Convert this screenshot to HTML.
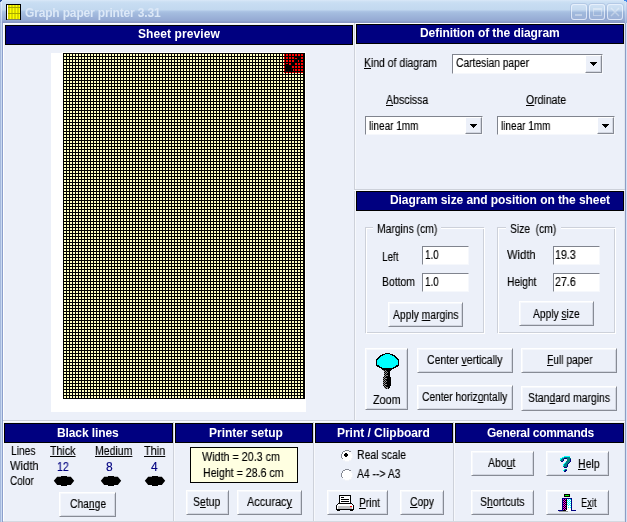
<!DOCTYPE html><html><head><meta charset="utf-8"><style>
html,body{margin:0;padding:0}
body{width:627px;height:522px;position:relative;overflow:hidden;background:#ECF0F9;font-family:"Liberation Sans",sans-serif}
body>div,body>span,body>svg{position:absolute;box-sizing:border-box;white-space:pre}
svg{display:block}
u{text-decoration:underline}
body>span{will-change:transform}
</style></head><body>
<div style="left:0px;top:0px;width:627px;height:23px;background:linear-gradient(to bottom,#DCE9F8 0px,#D0E2F5 1px,#C8DDF2 3px,#C2D8EF 10px,#AEC6E6 11px,#A4BCDF 13px,#94A8D2 21px,#8797C4 22px)"></div>
<div style="left:0px;top:23px;width:627px;height:499px;background:#ECF0F9"></div>
<div style="left:0px;top:3px;width:1px;height:20px;background:linear-gradient(#C4D6F0,#9EB2DA)"></div>
<div style="left:1px;top:2px;width:1px;height:21px;background:linear-gradient(#E4EEFA,#C4D4EE)"></div>
<div style="left:625px;top:3px;width:1px;height:20px;background:linear-gradient(#D6E4F6,#A8BCE0)"></div>
<div style="left:626px;top:2px;width:1px;height:21px;background:linear-gradient(#C4D6F0,#9EB2DA)"></div>
<div style="left:0px;top:23px;width:1px;height:499px;background:#A6B9DD"></div>
<div style="left:1px;top:23px;width:1px;height:499px;background:#C9DAF2"></div>
<div style="left:2px;top:23px;width:1px;height:499px;background:#8C9FCC"></div>
<div style="left:3px;top:23px;width:1px;height:499px;background:#fff"></div>
<div style="left:3px;top:23px;width:622px;height:1px;background:#fff"></div>
<div style="left:624px;top:23px;width:1px;height:499px;background:#E2E6EE"></div>
<div style="left:625px;top:23px;width:1px;height:499px;background:#8C9EC6"></div>
<div style="left:626px;top:23px;width:1px;height:499px;background:#D4E2F6"></div>
<div style="left:3px;top:521px;width:622px;height:1px;background:#D5D9E1"></div>
<div style="left:0px;top:0px;width:2px;height:1px;background:#2B4F9C"></div>
<div style="left:0px;top:1px;width:1px;height:1px;background:#2B4F9C"></div>
<div style="left:624px;top:0px;width:3px;height:1px;background:#3D86E8"></div>
<div style="left:626px;top:1px;width:1px;height:1px;background:#3D86E8"></div>
<svg style="left:6px;top:4px" width="15" height="16" shape-rendering="crispEdges"><rect x="0" y="0" width="15" height="1" fill="#000"/><rect x="0" y="1" width="1" height="1" fill="#000"/><rect x="1" y="1" width="1" height="1" fill="#FFFFFF"/><rect x="2" y="1" width="2" height="1" fill="#D8D800"/><rect x="4" y="1" width="1" height="1" fill="#FFFF00"/><rect x="5" y="1" width="2" height="1" fill="#D8D800"/><rect x="7" y="1" width="1" height="1" fill="#FFFF00"/><rect x="8" y="1" width="2" height="1" fill="#D8D800"/><rect x="10" y="1" width="1" height="1" fill="#FFFF00"/><rect x="11" y="1" width="2" height="1" fill="#D8D800"/><rect x="13" y="1" width="1" height="1" fill="#FFFF00"/><rect x="14" y="1" width="1" height="1" fill="#000"/><rect x="0" y="2" width="1" height="1" fill="#000"/><rect x="1" y="2" width="1" height="1" fill="#FFFFFF"/><rect x="2" y="2" width="2" height="1" fill="#D8D800"/><rect x="4" y="2" width="1" height="1" fill="#FFFF00"/><rect x="5" y="2" width="2" height="1" fill="#D8D800"/><rect x="7" y="2" width="1" height="1" fill="#FFFF00"/><rect x="8" y="2" width="2" height="1" fill="#D8D800"/><rect x="10" y="2" width="1" height="1" fill="#FFFF00"/><rect x="11" y="2" width="2" height="1" fill="#D8D800"/><rect x="13" y="2" width="1" height="1" fill="#FFFF00"/><rect x="14" y="2" width="1" height="1" fill="#000"/><rect x="0" y="3" width="1" height="1" fill="#000"/><rect x="1" y="3" width="1" height="1" fill="#FFFFFF"/><rect x="2" y="3" width="12" height="1" fill="#A8A800"/><rect x="14" y="3" width="1" height="1" fill="#000"/><rect x="0" y="4" width="1" height="1" fill="#000"/><rect x="1" y="4" width="1" height="1" fill="#FFFFFF"/><rect x="2" y="4" width="2" height="1" fill="#D8D800"/><rect x="4" y="4" width="1" height="1" fill="#FFFF00"/><rect x="5" y="4" width="2" height="1" fill="#D8D800"/><rect x="7" y="4" width="1" height="1" fill="#FFFF00"/><rect x="8" y="4" width="2" height="1" fill="#D8D800"/><rect x="10" y="4" width="1" height="1" fill="#FFFF00"/><rect x="11" y="4" width="2" height="1" fill="#D8D800"/><rect x="13" y="4" width="1" height="1" fill="#FFFF00"/><rect x="14" y="4" width="1" height="1" fill="#000"/><rect x="0" y="5" width="1" height="1" fill="#000"/><rect x="1" y="5" width="1" height="1" fill="#FFFFFF"/><rect x="2" y="5" width="2" height="1" fill="#D8D800"/><rect x="4" y="5" width="1" height="1" fill="#FFFF00"/><rect x="5" y="5" width="2" height="1" fill="#D8D800"/><rect x="7" y="5" width="1" height="1" fill="#FFFF00"/><rect x="8" y="5" width="2" height="1" fill="#D8D800"/><rect x="10" y="5" width="1" height="1" fill="#FFFF00"/><rect x="11" y="5" width="2" height="1" fill="#D8D800"/><rect x="13" y="5" width="1" height="1" fill="#FFFF00"/><rect x="14" y="5" width="1" height="1" fill="#000"/><rect x="0" y="6" width="1" height="1" fill="#000"/><rect x="1" y="6" width="1" height="1" fill="#FFFFFF"/><rect x="2" y="6" width="2" height="1" fill="#D8D800"/><rect x="4" y="6" width="1" height="1" fill="#FFFF00"/><rect x="5" y="6" width="2" height="1" fill="#D8D800"/><rect x="7" y="6" width="1" height="1" fill="#FFFF00"/><rect x="8" y="6" width="2" height="1" fill="#D8D800"/><rect x="10" y="6" width="1" height="1" fill="#FFFF00"/><rect x="11" y="6" width="2" height="1" fill="#D8D800"/><rect x="13" y="6" width="1" height="1" fill="#FFFF00"/><rect x="14" y="6" width="1" height="1" fill="#000"/><rect x="0" y="7" width="1" height="1" fill="#000"/><rect x="1" y="7" width="1" height="1" fill="#FFFFFF"/><rect x="2" y="7" width="2" height="1" fill="#D8D800"/><rect x="4" y="7" width="1" height="1" fill="#FFFF00"/><rect x="5" y="7" width="2" height="1" fill="#D8D800"/><rect x="7" y="7" width="1" height="1" fill="#FFFF00"/><rect x="8" y="7" width="2" height="1" fill="#D8D800"/><rect x="10" y="7" width="1" height="1" fill="#FFFF00"/><rect x="11" y="7" width="2" height="1" fill="#D8D800"/><rect x="13" y="7" width="1" height="1" fill="#FFFF00"/><rect x="14" y="7" width="1" height="1" fill="#000"/><rect x="0" y="8" width="1" height="1" fill="#000"/><rect x="1" y="8" width="1" height="1" fill="#FFFFFF"/><rect x="2" y="8" width="2" height="1" fill="#D8D800"/><rect x="4" y="8" width="1" height="1" fill="#FFFF00"/><rect x="5" y="8" width="2" height="1" fill="#D8D800"/><rect x="7" y="8" width="1" height="1" fill="#FFFF00"/><rect x="8" y="8" width="2" height="1" fill="#D8D800"/><rect x="10" y="8" width="1" height="1" fill="#FFFF00"/><rect x="11" y="8" width="2" height="1" fill="#D8D800"/><rect x="13" y="8" width="1" height="1" fill="#FFFF00"/><rect x="14" y="8" width="1" height="1" fill="#000"/><rect x="0" y="9" width="1" height="1" fill="#000"/><rect x="1" y="9" width="1" height="1" fill="#FFFFFF"/><rect x="2" y="9" width="12" height="1" fill="#A8A800"/><rect x="14" y="9" width="1" height="1" fill="#000"/><rect x="0" y="10" width="1" height="1" fill="#000"/><rect x="1" y="10" width="1" height="1" fill="#FFFFFF"/><rect x="2" y="10" width="2" height="1" fill="#D8D800"/><rect x="4" y="10" width="1" height="1" fill="#FFFF00"/><rect x="5" y="10" width="2" height="1" fill="#D8D800"/><rect x="7" y="10" width="1" height="1" fill="#FFFF00"/><rect x="8" y="10" width="2" height="1" fill="#D8D800"/><rect x="10" y="10" width="1" height="1" fill="#FFFF00"/><rect x="11" y="10" width="2" height="1" fill="#D8D800"/><rect x="13" y="10" width="1" height="1" fill="#FFFF00"/><rect x="14" y="10" width="1" height="1" fill="#000"/><rect x="0" y="11" width="1" height="1" fill="#000"/><rect x="1" y="11" width="1" height="1" fill="#FFFFFF"/><rect x="2" y="11" width="2" height="1" fill="#D8D800"/><rect x="4" y="11" width="1" height="1" fill="#FFFF00"/><rect x="5" y="11" width="2" height="1" fill="#D8D800"/><rect x="7" y="11" width="1" height="1" fill="#FFFF00"/><rect x="8" y="11" width="2" height="1" fill="#D8D800"/><rect x="10" y="11" width="1" height="1" fill="#FFFF00"/><rect x="11" y="11" width="2" height="1" fill="#D8D800"/><rect x="13" y="11" width="1" height="1" fill="#FFFF00"/><rect x="14" y="11" width="1" height="1" fill="#000"/><rect x="0" y="12" width="1" height="1" fill="#000"/><rect x="1" y="12" width="1" height="1" fill="#FFFFFF"/><rect x="2" y="12" width="2" height="1" fill="#D8D800"/><rect x="4" y="12" width="1" height="1" fill="#FFFF00"/><rect x="5" y="12" width="2" height="1" fill="#D8D800"/><rect x="7" y="12" width="1" height="1" fill="#FFFF00"/><rect x="8" y="12" width="2" height="1" fill="#D8D800"/><rect x="10" y="12" width="1" height="1" fill="#FFFF00"/><rect x="11" y="12" width="2" height="1" fill="#D8D800"/><rect x="13" y="12" width="1" height="1" fill="#FFFF00"/><rect x="14" y="12" width="1" height="1" fill="#000"/><rect x="0" y="13" width="1" height="1" fill="#000"/><rect x="1" y="13" width="1" height="1" fill="#FFFFFF"/><rect x="2" y="13" width="2" height="1" fill="#D8D800"/><rect x="4" y="13" width="1" height="1" fill="#FFFF00"/><rect x="5" y="13" width="2" height="1" fill="#D8D800"/><rect x="7" y="13" width="1" height="1" fill="#FFFF00"/><rect x="8" y="13" width="2" height="1" fill="#D8D800"/><rect x="10" y="13" width="1" height="1" fill="#FFFF00"/><rect x="11" y="13" width="2" height="1" fill="#D8D800"/><rect x="13" y="13" width="1" height="1" fill="#FFFF00"/><rect x="14" y="13" width="1" height="1" fill="#000"/><rect x="0" y="14" width="1" height="1" fill="#000"/><rect x="1" y="14" width="1" height="1" fill="#FFFFFF"/><rect x="2" y="14" width="2" height="1" fill="#D8D800"/><rect x="4" y="14" width="1" height="1" fill="#FFFF00"/><rect x="5" y="14" width="2" height="1" fill="#D8D800"/><rect x="7" y="14" width="1" height="1" fill="#FFFF00"/><rect x="8" y="14" width="2" height="1" fill="#D8D800"/><rect x="10" y="14" width="1" height="1" fill="#FFFF00"/><rect x="11" y="14" width="2" height="1" fill="#D8D800"/><rect x="13" y="14" width="1" height="1" fill="#FFFF00"/><rect x="14" y="14" width="1" height="1" fill="#000"/><rect x="0" y="15" width="1" height="1" fill="#000"/><rect x="1" y="15" width="13" height="1" fill="#808060"/><rect x="14" y="15" width="1" height="1" fill="#000"/></svg>
<span style="left:25px;top:6px;font:bold 12px Liberation Sans;line-height:14px;color:#DCE8F7;letter-spacing:-0.161px;">Graph paper printer 3.31</span>
<div style="left:571px;top:4px;width:16px;height:16px;border:1px solid rgba(240,246,255,0.75);border-radius:3px;box-sizing:border-box;box-shadow:0 0 0 1px rgba(120,145,190,0.25);background:linear-gradient(rgba(255,255,255,0.15),rgba(255,255,255,0.05) 50%,rgba(120,150,200,0.12) 50%,rgba(255,255,255,0.05))"></div>
<div style="left:589px;top:4px;width:16px;height:16px;border:1px solid rgba(240,246,255,0.75);border-radius:3px;box-sizing:border-box;box-shadow:0 0 0 1px rgba(120,145,190,0.25);background:linear-gradient(rgba(255,255,255,0.15),rgba(255,255,255,0.05) 50%,rgba(120,150,200,0.12) 50%,rgba(255,255,255,0.05))"></div>
<div style="left:607px;top:4px;width:16px;height:16px;border:1px solid rgba(240,246,255,0.75);border-radius:3px;box-sizing:border-box;box-shadow:0 0 0 1px rgba(120,145,190,0.25);background:linear-gradient(rgba(255,255,255,0.15),rgba(255,255,255,0.05) 50%,rgba(120,150,200,0.12) 50%,rgba(255,255,255,0.05))"></div>
<div style="left:575px;top:14px;width:7px;height:2px;background:rgba(255,255,255,0.35)"></div>
<div style="left:593px;top:8px;width:9px;height:8px;border:1px solid rgba(255,255,255,0.35);border-top-width:2px;box-sizing:border-box"></div>
<svg style="left:607px;top:4px" width="16" height="16"><path d="M4 4L12 12M12 4L4 12" stroke="rgba(255,255,255,0.35)" stroke-width="1.5"/></svg>
<div style="left:5px;top:25px;width:348px;height:20px;border:1px solid #000;background:#000080"></div>
<span style="left:138px;top:27px;font:bold 12px Liberation Sans;line-height:14px;color:#fff;letter-spacing:0.094px;">Sheet preview</span>
<div style="left:51px;top:53px;width:255px;height:359px;background:#fff"></div>
<div style="left:62px;top:52px;width:244px;height:1px;background:#fff"></div>
<div style="left:63px;top:53px;width:242px;height:346px;background-color:#FFFFC0;background-image:linear-gradient(to right,#000 1px,transparent 1px),linear-gradient(to bottom,#000 1px,transparent 1px);background-size:3px 3px"></div>
<div style="left:303px;top:53px;width:2px;height:346px;background:#000"></div>
<div style="left:63px;top:398px;width:242px;height:1px;background:#000"></div>
<div style="left:284px;top:53px;width:20px;height:20px;background-color:#FF0000;background-image:linear-gradient(to right,#000 1px,transparent 1px),linear-gradient(to bottom,#000 1px,transparent 1px);background-size:3px 3px;background-position:1px 0"></div>
<div style="left:298px;top:57px;width:2px;height:2px;background:#000"></div>
<div style="left:295px;top:57px;width:2px;height:1px;background:#000"></div>
<div style="left:295px;top:60px;width:2px;height:2px;background:#000"></div>
<div style="left:299px;top:60px;width:1px;height:2px;background:#000"></div>
<div style="left:292px;top:63px;width:2px;height:2px;background:#000"></div>
<div style="left:286px;top:64px;width:2px;height:1px;background:#000"></div>
<div style="left:286px;top:66px;width:5px;height:2px;background:#000"></div>
<div style="left:286px;top:69px;width:5px;height:2px;background:#000"></div>
<div style="left:292px;top:69px;width:1px;height:2px;background:#000"></div>
<div style="left:289px;top:68px;width:2px;height:1px;background:#000"></div>
<div style="left:287px;top:65px;width:4px;height:1px;background:#000"></div>
<div style="left:354px;top:23px;width:1px;height:398px;background:#CDD1DA"></div>
<div style="left:355px;top:23px;width:1px;height:398px;background:#F6F8FC"></div>
<div style="left:356px;top:24px;width:268px;height:20px;border:1px solid #000;background:#000080"></div>
<span style="left:420px;top:26px;font:bold 12px Liberation Sans;line-height:14px;color:#fff;letter-spacing:-0.069px;">Definition of the diagram</span>
<span style="left:364px;top:56px;font:12px Liberation Sans;line-height:14px;color:#000;transform:scaleX(0.8685);transform-origin:0 0;-webkit-text-stroke:0.15px #000;"><u>K</u>ind of diagram</span>
<div style="left:452px;top:54px;width:151px;height:20px;border:1px solid;border-color:#80848E #F6F8FC #F6F8FC #80848E;background:#fff"></div>
<div style="left:585px;top:55px;width:17px;height:18px;border:1px solid;border-color:#FFFFFF #878B95 #878B95 #FFFFFF;box-shadow:inset -1px -1px #D2D6E0;background:#ECF0F9"></div>
<svg style="left:590px;top:62px" width="7" height="4"><path d="M0 0h7v1h-1v1h-1v1h-1v1h-1v-1h-1v-1h-1v-1h-1z" fill="#000"/></svg>
<span style="left:456px;top:56px;font:12px Liberation Sans;line-height:14px;color:#000;transform:scaleX(0.8549);transform-origin:0 0;-webkit-text-stroke:0.15px #000;">Cartesian paper</span>
<span style="left:386px;top:93px;font:12px Liberation Sans;line-height:14px;color:#000;transform:scaleX(0.8812);transform-origin:0 0;-webkit-text-stroke:0.15px #000;"><u>A</u>bscissa</span>
<span style="left:526px;top:93px;font:12px Liberation Sans;line-height:14px;color:#000;transform:scaleX(0.8738);transform-origin:0 0;-webkit-text-stroke:0.15px #000;"><u>O</u>rdinate</span>
<div style="left:365px;top:116px;width:118px;height:19px;border:1px solid;border-color:#80848E #F6F8FC #F6F8FC #80848E;background:#fff"></div>
<div style="left:465px;top:117px;width:17px;height:17px;border:1px solid;border-color:#FFFFFF #878B95 #878B95 #FFFFFF;box-shadow:inset -1px -1px #D2D6E0;background:#ECF0F9"></div>
<svg style="left:470px;top:124px" width="7" height="4"><path d="M0 0h7v1h-1v1h-1v1h-1v1h-1v-1h-1v-1h-1v-1h-1z" fill="#000"/></svg>
<span style="left:369px;top:119px;font:12px Liberation Sans;line-height:14px;color:#000;transform:scaleX(0.8340);transform-origin:0 0;-webkit-text-stroke:0.15px #000;">linear 1mm</span>
<div style="left:497px;top:116px;width:118px;height:19px;border:1px solid;border-color:#80848E #F6F8FC #F6F8FC #80848E;background:#fff"></div>
<div style="left:597px;top:117px;width:17px;height:17px;border:1px solid;border-color:#FFFFFF #878B95 #878B95 #FFFFFF;box-shadow:inset -1px -1px #D2D6E0;background:#ECF0F9"></div>
<svg style="left:602px;top:124px" width="7" height="4"><path d="M0 0h7v1h-1v1h-1v1h-1v1h-1v-1h-1v-1h-1v-1h-1z" fill="#000"/></svg>
<span style="left:501px;top:119px;font:12px Liberation Sans;line-height:14px;color:#000;transform:scaleX(0.8340);transform-origin:0 0;-webkit-text-stroke:0.15px #000;">linear 1mm</span>
<div style="left:354px;top:189px;width:271px;height:1px;background:#CDD1DA"></div>
<div style="left:354px;top:190px;width:271px;height:1px;background:#FAFBFD"></div>
<div style="left:356px;top:191px;width:268px;height:20px;border:1px solid #000;background:#000080"></div>
<span style="left:390px;top:193px;font:bold 12px Liberation Sans;line-height:14px;color:#fff;letter-spacing:-0.073px;">Diagram size and position on the sheet</span>
<div style="left:365px;top:227px;width:119px;height:106px;border:1px solid #CDD1DA;background:transparent"></div>
<div style="left:366px;top:228px;width:119px;height:106px;border:1px solid #fff;background:transparent"></div>
<div style="left:373px;top:225px;width:68px;height:5px;background:#ECF0F9"></div>
<span style="left:377px;top:222px;font:12px Liberation Sans;line-height:14px;color:#000;transform:scaleX(0.8614);transform-origin:0 0;-webkit-text-stroke:0.15px #000;">Margins (cm)</span>
<span style="left:382px;top:250px;font:12px Liberation Sans;line-height:14px;color:#000;transform:scaleX(0.8220);transform-origin:0 0;-webkit-text-stroke:0.15px #000;">Left</span>
<div style="left:422px;top:246px;width:47px;height:19px;border:1px solid;border-color:#80848E #F6F8FC #F6F8FC #80848E;background:#fff"></div>
<span style="left:425px;top:248px;font:12px Liberation Sans;line-height:14px;color:#000;transform:scaleX(0.8232);transform-origin:0 0;-webkit-text-stroke:0.15px #000;">1.0</span>
<span style="left:382px;top:275px;font:12px Liberation Sans;line-height:14px;color:#000;transform:scaleX(0.8680);transform-origin:0 0;-webkit-text-stroke:0.15px #000;">Bottom</span>
<div style="left:422px;top:273px;width:47px;height:19px;border:1px solid;border-color:#80848E #F6F8FC #F6F8FC #80848E;background:#fff"></div>
<span style="left:425px;top:275px;font:12px Liberation Sans;line-height:14px;color:#000;transform:scaleX(0.8232);transform-origin:0 0;-webkit-text-stroke:0.15px #000;">1.0</span>
<div style="left:388px;top:302px;width:75px;height:25px;border:1px solid;border-color:#FFFFFF #878B95 #878B95 #FFFFFF;box-shadow:inset 1px 1px #F6F8FC,inset -1px -1px #D2D6E0;background:#ECF0F9"></div>
<span style="left:393px;top:308px;font:12px Liberation Sans;line-height:14px;color:#000;transform:scaleX(0.8615);transform-origin:0 0;-webkit-text-stroke:0.15px #000;">Apply <u>m</u>argins</span>
<div style="left:497px;top:227px;width:118px;height:106px;border:1px solid #CDD1DA;background:transparent"></div>
<div style="left:498px;top:228px;width:118px;height:106px;border:1px solid #fff;background:transparent"></div>
<div style="left:506px;top:225px;width:55px;height:5px;background:#ECF0F9"></div>
<span style="left:510px;top:222px;font:12px Liberation Sans;line-height:14px;color:#000;transform:scaleX(0.8555);transform-origin:0 0;-webkit-text-stroke:0.15px #000;">Size&nbsp; (cm)</span>
<span style="left:507px;top:248px;font:12px Liberation Sans;line-height:14px;color:#000;transform:scaleX(0.9333);transform-origin:0 0;-webkit-text-stroke:0.15px #000;">Width</span>
<div style="left:553px;top:246px;width:47px;height:19px;border:1px solid;border-color:#80848E #F6F8FC #F6F8FC #80848E;background:#fff"></div>
<span style="left:555px;top:248px;font:12px Liberation Sans;line-height:14px;color:#000;transform:scaleX(0.8868);transform-origin:0 0;-webkit-text-stroke:0.15px #000;">19.3</span>
<span style="left:507px;top:275px;font:12px Liberation Sans;line-height:14px;color:#000;transform:scaleX(0.8486);transform-origin:0 0;-webkit-text-stroke:0.15px #000;">Height</span>
<div style="left:553px;top:273px;width:47px;height:19px;border:1px solid;border-color:#80848E #F6F8FC #F6F8FC #80848E;background:#fff"></div>
<span style="left:555px;top:275px;font:12px Liberation Sans;line-height:14px;color:#000;transform:scaleX(0.8868);transform-origin:0 0;-webkit-text-stroke:0.15px #000;">27.6</span>
<div style="left:519px;top:301px;width:75px;height:25px;border:1px solid;border-color:#FFFFFF #878B95 #878B95 #FFFFFF;box-shadow:inset 1px 1px #F6F8FC,inset -1px -1px #D2D6E0;background:#ECF0F9"></div>
<span style="left:533px;top:307px;font:12px Liberation Sans;line-height:14px;color:#000;transform:scaleX(0.8543);transform-origin:0 0;-webkit-text-stroke:0.15px #000;">Apply <u>s</u>ize</span>
<div style="left:365px;top:348px;width:43px;height:62px;border:1px solid;border-color:#FFFFFF #878B95 #878B95 #FFFFFF;box-shadow:inset 1px 1px #F6F8FC,inset -1px -1px #D2D6E0;background:#ECF0F9"></div>
<svg style="left:375px;top:353px" width="25" height="16" shape-rendering="crispEdges"><rect x="10" y="0" width="5" height="1" fill="#000"/><rect x="7" y="1" width="3" height="1" fill="#000"/><rect x="10" y="1" width="5" height="1" fill="#00FFFF"/><rect x="15" y="1" width="3" height="1" fill="#000"/><rect x="5" y="2" width="3" height="1" fill="#000"/><rect x="8" y="2" width="9" height="1" fill="#00FFFF"/><rect x="17" y="2" width="3" height="1" fill="#000"/><rect x="4" y="3" width="2" height="1" fill="#000"/><rect x="6" y="3" width="13" height="1" fill="#00FFFF"/><rect x="19" y="3" width="2" height="1" fill="#000"/><rect x="3" y="4" width="2" height="1" fill="#000"/><rect x="5" y="4" width="15" height="1" fill="#00FFFF"/><rect x="20" y="4" width="2" height="1" fill="#000"/><rect x="2" y="5" width="2" height="1" fill="#000"/><rect x="4" y="5" width="17" height="1" fill="#00FFFF"/><rect x="21" y="5" width="2" height="1" fill="#000"/><rect x="1" y="6" width="2" height="1" fill="#000"/><rect x="3" y="6" width="19" height="1" fill="#00FFFF"/><rect x="22" y="6" width="2" height="1" fill="#000"/><rect x="1" y="7" width="1" height="1" fill="#000"/><rect x="2" y="7" width="21" height="1" fill="#00FFFF"/><rect x="23" y="7" width="1" height="1" fill="#000"/><rect x="1" y="8" width="1" height="1" fill="#000"/><rect x="2" y="8" width="21" height="1" fill="#00FFFF"/><rect x="23" y="8" width="1" height="1" fill="#000"/><rect x="1" y="9" width="1" height="1" fill="#000"/><rect x="2" y="9" width="21" height="1" fill="#00FFFF"/><rect x="23" y="9" width="1" height="1" fill="#000"/><rect x="1" y="10" width="1" height="1" fill="#000"/><rect x="2" y="10" width="21" height="1" fill="#00FFFF"/><rect x="23" y="10" width="1" height="1" fill="#000"/><rect x="1" y="11" width="1" height="1" fill="#000"/><rect x="2" y="11" width="21" height="1" fill="#00FFFF"/><rect x="23" y="11" width="1" height="1" fill="#000"/><rect x="1" y="12" width="3" height="1" fill="#000"/><rect x="4" y="12" width="17" height="1" fill="#00FFFF"/><rect x="21" y="12" width="3" height="1" fill="#000"/><rect x="2" y="13" width="3" height="1" fill="#000"/><rect x="5" y="13" width="15" height="1" fill="#00FFFF"/><rect x="20" y="13" width="3" height="1" fill="#000"/><rect x="4" y="14" width="3" height="1" fill="#000"/><rect x="7" y="14" width="11" height="1" fill="#00FFFF"/><rect x="18" y="14" width="3" height="1" fill="#000"/><rect x="6" y="15" width="13" height="1" fill="#000"/></svg>
<svg style="left:382px;top:369px" width="10" height="20" shape-rendering="crispEdges"><rect x="0" y="0" width="10" height="1" fill="#000"/><rect x="1" y="1" width="1" height="1" fill="#909090"/><rect x="2" y="1" width="1" height="1" fill="#000"/><rect x="3" y="1" width="1" height="1" fill="#909090"/><rect x="4" y="1" width="5" height="1" fill="#000"/><rect x="2" y="2" width="1" height="1" fill="#909090"/><rect x="3" y="2" width="1" height="1" fill="#000"/><rect x="4" y="2" width="1" height="1" fill="#909090"/><rect x="5" y="2" width="3" height="1" fill="#000"/><rect x="2" y="3" width="1" height="1" fill="#000"/><rect x="3" y="3" width="1" height="1" fill="#909090"/><rect x="4" y="3" width="1" height="1" fill="#000"/><rect x="5" y="3" width="1" height="1" fill="#909090"/><rect x="6" y="3" width="2" height="1" fill="#000"/><rect x="2" y="4" width="1" height="1" fill="#909090"/><rect x="3" y="4" width="1" height="1" fill="#000"/><rect x="4" y="4" width="1" height="1" fill="#909090"/><rect x="5" y="4" width="3" height="1" fill="#000"/><rect x="2" y="5" width="1" height="1" fill="#000"/><rect x="3" y="5" width="1" height="1" fill="#909090"/><rect x="4" y="5" width="4" height="1" fill="#000"/><rect x="2" y="6" width="1" height="1" fill="#909090"/><rect x="3" y="6" width="1" height="1" fill="#000"/><rect x="4" y="6" width="2" height="1" fill="#909090"/><rect x="6" y="6" width="2" height="1" fill="#000"/><rect x="2" y="7" width="1" height="1" fill="#000"/><rect x="3" y="7" width="1" height="1" fill="#909090"/><rect x="4" y="7" width="4" height="1" fill="#000"/><rect x="1" y="8" width="1" height="1" fill="#000"/><rect x="2" y="8" width="1" height="1" fill="#909090"/><rect x="3" y="8" width="6" height="1" fill="#000"/><rect x="1" y="9" width="1" height="1" fill="#909090"/><rect x="2" y="9" width="1" height="1" fill="#000"/><rect x="3" y="9" width="2" height="1" fill="#909090"/><rect x="5" y="9" width="4" height="1" fill="#000"/><rect x="1" y="10" width="1" height="1" fill="#000"/><rect x="2" y="10" width="1" height="1" fill="#909090"/><rect x="3" y="10" width="6" height="1" fill="#000"/><rect x="1" y="11" width="1" height="1" fill="#909090"/><rect x="2" y="11" width="1" height="1" fill="#000"/><rect x="3" y="11" width="1" height="1" fill="#909090"/><rect x="4" y="11" width="5" height="1" fill="#000"/><rect x="1" y="12" width="1" height="1" fill="#000"/><rect x="2" y="12" width="1" height="1" fill="#909090"/><rect x="3" y="12" width="1" height="1" fill="#000"/><rect x="4" y="12" width="1" height="1" fill="#909090"/><rect x="5" y="12" width="4" height="1" fill="#000"/><rect x="1" y="13" width="1" height="1" fill="#909090"/><rect x="2" y="13" width="1" height="1" fill="#000"/><rect x="3" y="13" width="1" height="1" fill="#909090"/><rect x="4" y="13" width="5" height="1" fill="#000"/><rect x="1" y="14" width="1" height="1" fill="#000"/><rect x="2" y="14" width="1" height="1" fill="#909090"/><rect x="3" y="14" width="6" height="1" fill="#000"/><rect x="1" y="15" width="1" height="1" fill="#909090"/><rect x="2" y="15" width="1" height="1" fill="#000"/><rect x="3" y="15" width="2" height="1" fill="#909090"/><rect x="5" y="15" width="4" height="1" fill="#000"/><rect x="1" y="16" width="1" height="1" fill="#000"/><rect x="2" y="16" width="1" height="1" fill="#909090"/><rect x="3" y="16" width="6" height="1" fill="#000"/><rect x="2" y="17" width="1" height="1" fill="#000"/><rect x="3" y="17" width="1" height="1" fill="#909090"/><rect x="4" y="17" width="4" height="1" fill="#000"/><rect x="2" y="18" width="1" height="1" fill="#909090"/><rect x="3" y="18" width="1" height="1" fill="#000"/><rect x="4" y="18" width="2" height="1" fill="#909090"/><rect x="6" y="18" width="2" height="1" fill="#000"/><rect x="3" y="19" width="1" height="1" fill="#909090"/><rect x="4" y="19" width="1" height="1" fill="#000"/><rect x="5" y="19" width="1" height="1" fill="#909090"/><rect x="6" y="19" width="1" height="1" fill="#000"/></svg>
<span style="left:373px;top:393px;font:12px Liberation Sans;line-height:14px;color:#000;transform:scaleX(0.8997);transform-origin:0 0;-webkit-text-stroke:0.15px #000;">Zoom</span>
<div style="left:417px;top:348px;width:96px;height:25px;border:1px solid;border-color:#FFFFFF #878B95 #878B95 #FFFFFF;box-shadow:inset 1px 1px #F6F8FC,inset -1px -1px #D2D6E0;background:#ECF0F9"></div>
<span style="left:427px;top:353px;font:12px Liberation Sans;line-height:14px;color:#000;transform:scaleX(0.8776);transform-origin:0 0;-webkit-text-stroke:0.15px #000;">Center <u>v</u>ertically</span>
<div style="left:521px;top:348px;width:96px;height:25px;border:1px solid;border-color:#FFFFFF #878B95 #878B95 #FFFFFF;box-shadow:inset 1px 1px #F6F8FC,inset -1px -1px #D2D6E0;background:#ECF0F9"></div>
<span style="left:547px;top:353px;font:12px Liberation Sans;line-height:14px;color:#000;transform:scaleX(0.8526);transform-origin:0 0;-webkit-text-stroke:0.15px #000;"><u>F</u>ull paper</span>
<div style="left:417px;top:385px;width:96px;height:25px;border:1px solid;border-color:#FFFFFF #878B95 #878B95 #FFFFFF;box-shadow:inset 1px 1px #F6F8FC,inset -1px -1px #D2D6E0;background:#ECF0F9"></div>
<span style="left:422px;top:390px;font:12px Liberation Sans;line-height:14px;color:#000;transform:scaleX(0.8526);transform-origin:0 0;-webkit-text-stroke:0.15px #000;">Center horiz<u>o</u>ntally</span>
<div style="left:521px;top:386px;width:96px;height:25px;border:1px solid;border-color:#FFFFFF #878B95 #878B95 #FFFFFF;box-shadow:inset 1px 1px #F6F8FC,inset -1px -1px #D2D6E0;background:#ECF0F9"></div>
<span style="left:528px;top:391px;font:12px Liberation Sans;line-height:14px;color:#000;transform:scaleX(0.8657);transform-origin:0 0;-webkit-text-stroke:0.15px #000;">Stan<u>d</u>ard margins</span>
<div style="left:3px;top:420px;width:622px;height:1px;background:#CDD1DA"></div>
<div style="left:3px;top:421px;width:622px;height:1px;background:#FAFBFD"></div>
<div style="left:173px;top:422px;width:1px;height:99px;background:#CDD1DA"></div>
<div style="left:174px;top:422px;width:1px;height:99px;background:#F6F8FC"></div>
<div style="left:313px;top:422px;width:1px;height:99px;background:#CDD1DA"></div>
<div style="left:314px;top:422px;width:1px;height:99px;background:#F6F8FC"></div>
<div style="left:453px;top:422px;width:1px;height:99px;background:#CDD1DA"></div>
<div style="left:454px;top:422px;width:1px;height:99px;background:#F6F8FC"></div>
<div style="left:4px;top:423px;width:169px;height:20px;border:1px solid #000;background:#000080"></div>
<span style="left:57px;top:426px;font:bold 12px Liberation Sans;line-height:14px;color:#fff;letter-spacing:-0.103px;">Black lines</span>
<span style="left:11px;top:444px;font:12px Liberation Sans;line-height:14px;color:#000;transform:scaleX(0.8505);transform-origin:0 0;-webkit-text-stroke:0.15px #000;">Lines</span>
<span style="left:50px;top:444px;font:12px Liberation Sans;line-height:14px;color:#000;transform:scaleX(0.8864);transform-origin:0 0;-webkit-text-stroke:0.15px #000;text-decoration:underline">Thick</span>
<span style="left:95px;top:444px;font:12px Liberation Sans;line-height:14px;color:#000;transform:scaleX(0.8739);transform-origin:0 0;-webkit-text-stroke:0.15px #000;text-decoration:underline">Medium</span>
<span style="left:144px;top:444px;font:12px Liberation Sans;line-height:14px;color:#000;transform:scaleX(0.9087);transform-origin:0 0;-webkit-text-stroke:0.15px #000;text-decoration:underline">Thin</span>
<span style="left:10px;top:459px;font:12px Liberation Sans;line-height:14px;color:#000;transform:scaleX(0.9333);transform-origin:0 0;-webkit-text-stroke:0.15px #000;">Width</span>
<span style="left:57px;top:460px;font:12px Liberation Sans;line-height:14px;color:#000080;transform:scaleX(0.8776);transform-origin:0 0;-webkit-text-stroke:0.15px #000080;">12</span>
<span style="left:106px;top:460px;font:12px Liberation Sans;line-height:14px;color:#000080;letter-spacing:0px;-webkit-text-stroke:0.15px #000080;">8</span>
<span style="left:151px;top:460px;font:12px Liberation Sans;line-height:14px;color:#000080;letter-spacing:0px;-webkit-text-stroke:0.15px #000080;">4</span>
<span style="left:10px;top:474px;font:12px Liberation Sans;line-height:14px;color:#000;transform:scaleX(0.8264);transform-origin:0 0;-webkit-text-stroke:0.15px #000;">Color</span>
<svg style="left:53px;top:476px" width="23" height="10"><path d="M0.8 4.7L4.2 0.8H8V0H14V0.8H17.8L21.2 4.7L17.8 8.9H14V9.9H8V8.9H4.2Z" fill="#000"/></svg>
<svg style="left:100px;top:476px" width="23" height="10"><path d="M0.8 4.7L4.2 0.8H8V0H14V0.8H17.8L21.2 4.7L17.8 8.9H14V9.9H8V8.9H4.2Z" fill="#000"/></svg>
<svg style="left:144px;top:476px" width="23" height="10"><path d="M0.8 4.7L4.2 0.8H8V0H14V0.8H17.8L21.2 4.7L17.8 8.9H14V9.9H8V8.9H4.2Z" fill="#000"/></svg>
<div style="left:59px;top:492px;width:57px;height:25px;border:1px solid;border-color:#FFFFFF #878B95 #878B95 #FFFFFF;box-shadow:inset 1px 1px #F6F8FC,inset -1px -1px #D2D6E0;background:#ECF0F9"></div>
<span style="left:70px;top:497px;font:12px Liberation Sans;line-height:14px;color:#000;transform:scaleX(0.8569);transform-origin:0 0;-webkit-text-stroke:0.15px #000;">Cha<u>n</u>ge</span>
<div style="left:175px;top:423px;width:138px;height:20px;border:1px solid #000;background:#000080"></div>
<span style="left:209px;top:426px;font:bold 12px Liberation Sans;line-height:14px;color:#fff;letter-spacing:-0.015px;">Printer setup</span>
<div style="left:190px;top:447px;width:108px;height:36px;border:1px solid #000;background:#FFFFE1"></div>
<span style="left:202px;top:450px;font:12px Liberation Sans;line-height:14px;color:#000;transform:scaleX(0.8961);transform-origin:0 0;-webkit-text-stroke:0.15px #000;">Width = 20.3 cm</span>
<span style="left:203px;top:466px;font:12px Liberation Sans;line-height:14px;color:#000;transform:scaleX(0.8852);transform-origin:0 0;-webkit-text-stroke:0.15px #000;">Height = 28.6 cm</span>
<div style="left:186px;top:490px;width:43px;height:25px;border:1px solid;border-color:#FFFFFF #878B95 #878B95 #FFFFFF;box-shadow:inset 1px 1px #F6F8FC,inset -1px -1px #D2D6E0;background:#ECF0F9"></div>
<span style="left:193px;top:495px;font:12px Liberation Sans;line-height:14px;color:#000;transform:scaleX(0.8679);transform-origin:0 0;-webkit-text-stroke:0.15px #000;">S<u>e</u>tup</span>
<div style="left:237px;top:490px;width:65px;height:25px;border:1px solid;border-color:#FFFFFF #878B95 #878B95 #FFFFFF;box-shadow:inset 1px 1px #F6F8FC,inset -1px -1px #D2D6E0;background:#ECF0F9"></div>
<span style="left:247px;top:495px;font:12px Liberation Sans;line-height:14px;color:#000;transform:scaleX(0.9119);transform-origin:0 0;-webkit-text-stroke:0.15px #000;">Accurac<u>y</u></span>
<div style="left:315px;top:423px;width:138px;height:20px;border:1px solid #000;background:#000080"></div>
<span style="left:337px;top:426px;font:bold 12px Liberation Sans;line-height:14px;color:#fff;letter-spacing:-0.031px;">Print / Clipboard</span>
<svg style="left:341px;top:450px" width="12" height="12" shape-rendering="crispEdges"><rect x="4" y="0" width="4" height="1" fill="#868A94"/><rect x="2" y="1" width="2" height="1" fill="#868A94"/><rect x="4" y="1" width="4" height="1" fill="#FFFFFF"/><rect x="8" y="1" width="2" height="1" fill="#868A94"/><rect x="1" y="2" width="1" height="1" fill="#868A94"/><rect x="2" y="2" width="8" height="1" fill="#FFFFFF"/><rect x="10" y="2" width="1" height="1" fill="#F2F4F9"/><rect x="1" y="3" width="1" height="1" fill="#868A94"/><rect x="2" y="3" width="2" height="1" fill="#FFFFFF"/><rect x="4" y="3" width="2" height="1" fill="#000000"/><rect x="6" y="3" width="4" height="1" fill="#FFFFFF"/><rect x="10" y="3" width="1" height="1" fill="#F2F4F9"/><rect x="0" y="4" width="1" height="1" fill="#868A94"/><rect x="1" y="4" width="2" height="1" fill="#FFFFFF"/><rect x="3" y="4" width="4" height="1" fill="#000000"/><rect x="7" y="4" width="4" height="1" fill="#FFFFFF"/><rect x="11" y="4" width="1" height="1" fill="#F2F4F9"/><rect x="0" y="5" width="1" height="1" fill="#868A94"/><rect x="1" y="5" width="2" height="1" fill="#FFFFFF"/><rect x="3" y="5" width="4" height="1" fill="#000000"/><rect x="7" y="5" width="4" height="1" fill="#FFFFFF"/><rect x="11" y="5" width="1" height="1" fill="#F2F4F9"/><rect x="0" y="6" width="1" height="1" fill="#868A94"/><rect x="1" y="6" width="3" height="1" fill="#FFFFFF"/><rect x="4" y="6" width="2" height="1" fill="#000000"/><rect x="6" y="6" width="5" height="1" fill="#FFFFFF"/><rect x="11" y="6" width="1" height="1" fill="#F2F4F9"/><rect x="0" y="7" width="1" height="1" fill="#868A94"/><rect x="1" y="7" width="10" height="1" fill="#FFFFFF"/><rect x="11" y="7" width="1" height="1" fill="#F2F4F9"/><rect x="1" y="8" width="1" height="1" fill="#868A94"/><rect x="2" y="8" width="8" height="1" fill="#FFFFFF"/><rect x="10" y="8" width="1" height="1" fill="#F2F4F9"/><rect x="1" y="9" width="1" height="1" fill="#F2F4F9"/><rect x="2" y="9" width="8" height="1" fill="#FFFFFF"/><rect x="10" y="9" width="1" height="1" fill="#F2F4F9"/><rect x="2" y="10" width="2" height="1" fill="#F2F4F9"/><rect x="4" y="10" width="4" height="1" fill="#FFFFFF"/><rect x="8" y="10" width="2" height="1" fill="#F2F4F9"/><rect x="4" y="11" width="4" height="1" fill="#F2F4F9"/></svg>
<span style="left:357px;top:448px;font:12px Liberation Sans;line-height:14px;color:#000;transform:scaleX(0.8766);transform-origin:0 0;-webkit-text-stroke:0.15px #000;">Real scale</span>
<svg style="left:341px;top:469px" width="12" height="12" shape-rendering="crispEdges"><rect x="4" y="0" width="4" height="1" fill="#868A94"/><rect x="2" y="1" width="2" height="1" fill="#868A94"/><rect x="4" y="1" width="4" height="1" fill="#FFFFFF"/><rect x="8" y="1" width="2" height="1" fill="#868A94"/><rect x="1" y="2" width="1" height="1" fill="#868A94"/><rect x="2" y="2" width="8" height="1" fill="#FFFFFF"/><rect x="10" y="2" width="1" height="1" fill="#F2F4F9"/><rect x="1" y="3" width="1" height="1" fill="#868A94"/><rect x="2" y="3" width="8" height="1" fill="#FFFFFF"/><rect x="10" y="3" width="1" height="1" fill="#F2F4F9"/><rect x="0" y="4" width="1" height="1" fill="#868A94"/><rect x="1" y="4" width="10" height="1" fill="#FFFFFF"/><rect x="11" y="4" width="1" height="1" fill="#F2F4F9"/><rect x="0" y="5" width="1" height="1" fill="#868A94"/><rect x="1" y="5" width="10" height="1" fill="#FFFFFF"/><rect x="11" y="5" width="1" height="1" fill="#F2F4F9"/><rect x="0" y="6" width="1" height="1" fill="#868A94"/><rect x="1" y="6" width="10" height="1" fill="#FFFFFF"/><rect x="11" y="6" width="1" height="1" fill="#F2F4F9"/><rect x="0" y="7" width="1" height="1" fill="#868A94"/><rect x="1" y="7" width="10" height="1" fill="#FFFFFF"/><rect x="11" y="7" width="1" height="1" fill="#F2F4F9"/><rect x="1" y="8" width="1" height="1" fill="#868A94"/><rect x="2" y="8" width="8" height="1" fill="#FFFFFF"/><rect x="10" y="8" width="1" height="1" fill="#F2F4F9"/><rect x="1" y="9" width="1" height="1" fill="#F2F4F9"/><rect x="2" y="9" width="8" height="1" fill="#FFFFFF"/><rect x="10" y="9" width="1" height="1" fill="#F2F4F9"/><rect x="2" y="10" width="2" height="1" fill="#F2F4F9"/><rect x="4" y="10" width="4" height="1" fill="#FFFFFF"/><rect x="8" y="10" width="2" height="1" fill="#F2F4F9"/><rect x="4" y="11" width="4" height="1" fill="#F2F4F9"/></svg>
<span style="left:357px;top:467px;font:12px Liberation Sans;line-height:14px;color:#000;transform:scaleX(0.8627);transform-origin:0 0;-webkit-text-stroke:0.15px #000;">A4 --> A3</span>
<div style="left:327px;top:490px;width:61px;height:25px;border:1px solid;border-color:#FFFFFF #878B95 #878B95 #FFFFFF;box-shadow:inset 1px 1px #F6F8FC,inset -1px -1px #D2D6E0;background:#ECF0F9"></div>
<svg style="left:336px;top:495px" width="18" height="16" shape-rendering="crispEdges"><rect x="3" y="0" width="12" height="1" fill="#000"/><rect x="3" y="1" width="1" height="1" fill="#000"/><rect x="4" y="1" width="10" height="1" fill="#FFFFFF"/><rect x="14" y="1" width="1" height="1" fill="#000"/><rect x="3" y="2" width="1" height="1" fill="#000"/><rect x="4" y="2" width="1" height="1" fill="#FFFFFF"/><rect x="5" y="2" width="3" height="1" fill="#000"/><rect x="8" y="2" width="6" height="1" fill="#FFFFFF"/><rect x="14" y="2" width="1" height="1" fill="#000"/><rect x="3" y="3" width="1" height="1" fill="#000"/><rect x="4" y="3" width="10" height="1" fill="#FFFFFF"/><rect x="14" y="3" width="1" height="1" fill="#000"/><rect x="3" y="4" width="1" height="1" fill="#000"/><rect x="4" y="4" width="1" height="1" fill="#FFFFFF"/><rect x="5" y="4" width="8" height="1" fill="#000"/><rect x="13" y="4" width="1" height="1" fill="#FFFFFF"/><rect x="14" y="4" width="1" height="1" fill="#000"/><rect x="3" y="5" width="1" height="1" fill="#000"/><rect x="4" y="5" width="10" height="1" fill="#FFFFFF"/><rect x="14" y="5" width="1" height="1" fill="#000"/><rect x="3" y="6" width="1" height="1" fill="#000"/><rect x="4" y="6" width="1" height="1" fill="#FFFFFF"/><rect x="5" y="6" width="8" height="1" fill="#000"/><rect x="13" y="6" width="1" height="1" fill="#FFFFFF"/><rect x="14" y="6" width="1" height="1" fill="#000"/><rect x="3" y="7" width="1" height="1" fill="#000"/><rect x="4" y="7" width="10" height="1" fill="#FFFFFF"/><rect x="14" y="7" width="1" height="1" fill="#000"/><rect x="2" y="8" width="14" height="1" fill="#000"/><rect x="1" y="9" width="1" height="1" fill="#000"/><rect x="2" y="9" width="14" height="1" fill="#FFFFFF"/><rect x="16" y="9" width="1" height="1" fill="#000"/><rect x="0" y="10" width="1" height="1" fill="#000"/><rect x="1" y="10" width="16" height="1" fill="#FFFFFF"/><rect x="17" y="10" width="1" height="1" fill="#000"/><rect x="0" y="11" width="1" height="1" fill="#000"/><rect x="1" y="11" width="1" height="1" fill="#FFFFFF"/><rect x="2" y="11" width="12" height="1" fill="#C0C0C0"/><rect x="14" y="11" width="2" height="1" fill="#FF0000"/><rect x="16" y="11" width="1" height="1" fill="#FFFFFF"/><rect x="17" y="11" width="1" height="1" fill="#000"/><rect x="0" y="12" width="1" height="1" fill="#000"/><rect x="1" y="12" width="1" height="1" fill="#FFFFFF"/><rect x="2" y="12" width="14" height="1" fill="#C0C0C0"/><rect x="16" y="12" width="1" height="1" fill="#FFFFFF"/><rect x="17" y="12" width="1" height="1" fill="#000"/><rect x="0" y="13" width="1" height="1" fill="#000"/><rect x="1" y="13" width="1" height="1" fill="#FFFFFF"/><rect x="2" y="13" width="14" height="1" fill="#C0C0C0"/><rect x="16" y="13" width="1" height="1" fill="#FFFFFF"/><rect x="17" y="13" width="1" height="1" fill="#000"/><rect x="0" y="14" width="18" height="1" fill="#000"/><rect x="1" y="15" width="3" height="1" fill="#000"/><rect x="14" y="15" width="3" height="1" fill="#000"/></svg>
<span style="left:359px;top:496px;font:12px Liberation Sans;line-height:14px;color:#000;transform:scaleX(0.8485);transform-origin:0 0;-webkit-text-stroke:0.15px #000;"><u>P</u>rint</span>
<div style="left:400px;top:490px;width:44px;height:25px;border:1px solid;border-color:#FFFFFF #878B95 #878B95 #FFFFFF;box-shadow:inset 1px 1px #F6F8FC,inset -1px -1px #D2D6E0;background:#ECF0F9"></div>
<span style="left:410px;top:495px;font:12px Liberation Sans;line-height:14px;color:#000;transform:scaleX(0.8567);transform-origin:0 0;-webkit-text-stroke:0.15px #000;"><u>C</u>opy</span>
<div style="left:455px;top:423px;width:169px;height:20px;border:1px solid #000;background:#000080"></div>
<span style="left:487px;top:426px;font:bold 12px Liberation Sans;line-height:14px;color:#fff;letter-spacing:-0.280px;">General commands</span>
<div style="left:471px;top:451px;width:63px;height:25px;border:1px solid;border-color:#FFFFFF #878B95 #878B95 #FFFFFF;box-shadow:inset 1px 1px #F6F8FC,inset -1px -1px #D2D6E0;background:#ECF0F9"></div>
<span style="left:488px;top:456px;font:12px Liberation Sans;line-height:14px;color:#000;transform:scaleX(0.8743);transform-origin:0 0;-webkit-text-stroke:0.15px #000;">Abo<u>u</u>t</span>
<div style="left:546px;top:451px;width:63px;height:25px;border:1px solid;border-color:#FFFFFF #878B95 #878B95 #FFFFFF;box-shadow:inset 1px 1px #F6F8FC,inset -1px -1px #D2D6E0;background:#ECF0F9"></div>
<svg style="left:560px;top:456px" width="11" height="16" shape-rendering="crispEdges"><rect x="4" y="0" width="6" height="1" fill="#00FFFF"/><rect x="2" y="1" width="2" height="1" fill="#00FFFF"/><rect x="4" y="1" width="6" height="1" fill="#008080"/><rect x="0" y="2" width="2" height="1" fill="#00FFFF"/><rect x="2" y="2" width="2" height="1" fill="#008080"/><rect x="4" y="2" width="3" height="1" fill="#000080"/><rect x="7" y="2" width="4" height="1" fill="#008080"/><rect x="0" y="3" width="1" height="1" fill="#00FFFF"/><rect x="1" y="3" width="2" height="1" fill="#008080"/><rect x="3" y="3" width="1" height="1" fill="#000080"/><rect x="7" y="3" width="3" height="1" fill="#008080"/><rect x="10" y="3" width="1" height="1" fill="#000080"/><rect x="0" y="4" width="3" height="1" fill="#008080"/><rect x="3" y="4" width="1" height="1" fill="#000080"/><rect x="7" y="4" width="3" height="1" fill="#008080"/><rect x="10" y="4" width="1" height="1" fill="#000080"/><rect x="1" y="5" width="2" height="1" fill="#000080"/><rect x="6" y="5" width="4" height="1" fill="#008080"/><rect x="10" y="5" width="1" height="1" fill="#000080"/><rect x="5" y="6" width="1" height="1" fill="#00FFFF"/><rect x="6" y="6" width="3" height="1" fill="#008080"/><rect x="9" y="6" width="1" height="1" fill="#000080"/><rect x="4" y="7" width="1" height="1" fill="#00FFFF"/><rect x="5" y="7" width="3" height="1" fill="#008080"/><rect x="8" y="7" width="1" height="1" fill="#000080"/><rect x="3" y="8" width="1" height="1" fill="#00FFFF"/><rect x="4" y="8" width="3" height="1" fill="#008080"/><rect x="7" y="8" width="1" height="1" fill="#000080"/><rect x="3" y="9" width="1" height="1" fill="#00FFFF"/><rect x="4" y="9" width="3" height="1" fill="#008080"/><rect x="7" y="9" width="1" height="1" fill="#000080"/><rect x="3" y="10" width="4" height="1" fill="#008080"/><rect x="7" y="10" width="1" height="1" fill="#000080"/><rect x="4" y="11" width="3" height="1" fill="#000080"/><rect x="4" y="13" width="1" height="1" fill="#00FFFF"/><rect x="5" y="13" width="2" height="1" fill="#008080"/><rect x="3" y="14" width="1" height="1" fill="#00FFFF"/><rect x="4" y="14" width="1" height="1" fill="#008080"/><rect x="5" y="14" width="2" height="1" fill="#000080"/><rect x="4" y="15" width="2" height="1" fill="#000080"/></svg>
<span style="left:578px;top:457px;font:12px Liberation Sans;line-height:14px;color:#000;transform:scaleX(0.8798);transform-origin:0 0;-webkit-text-stroke:0.15px #000;"><u>H</u>elp</span>
<div style="left:471px;top:490px;width:63px;height:25px;border:1px solid;border-color:#FFFFFF #878B95 #878B95 #FFFFFF;box-shadow:inset 1px 1px #F6F8FC,inset -1px -1px #D2D6E0;background:#ECF0F9"></div>
<span style="left:480px;top:495px;font:12px Liberation Sans;line-height:14px;color:#000;transform:scaleX(0.8759);transform-origin:0 0;-webkit-text-stroke:0.15px #000;">S<u>h</u>ortcuts</span>
<div style="left:546px;top:490px;width:63px;height:25px;border:1px solid;border-color:#FFFFFF #878B95 #878B95 #FFFFFF;box-shadow:inset 1px 1px #F6F8FC,inset -1px -1px #D2D6E0;background:#ECF0F9"></div>
<svg style="left:558px;top:494px" width="18" height="18" shape-rendering="crispEdges"><rect x="6" y="0" width="6" height="1" fill="#000"/><rect x="6" y="1" width="1" height="1" fill="#000"/><rect x="7" y="1" width="4" height="1" fill="#00FF00"/><rect x="11" y="1" width="1" height="1" fill="#000"/><rect x="6" y="2" width="6" height="1" fill="#000"/><rect x="4" y="4" width="10" height="1" fill="#000080"/><rect x="4" y="5" width="1" height="1" fill="#000080"/><rect x="5" y="5" width="1" height="1" fill="#FF00FF"/><rect x="6" y="5" width="1" height="1" fill="#000"/><rect x="7" y="5" width="1" height="1" fill="#FF00FF"/><rect x="8" y="5" width="1" height="1" fill="#000"/><rect x="9" y="5" width="1" height="1" fill="#FFFFFF"/><rect x="10" y="5" width="1" height="1" fill="#00FFFF"/><rect x="11" y="5" width="1" height="1" fill="#FFFFFF"/><rect x="12" y="5" width="1" height="1" fill="#00FFFF"/><rect x="13" y="5" width="1" height="1" fill="#000080"/><rect x="4" y="6" width="1" height="1" fill="#000080"/><rect x="5" y="6" width="1" height="1" fill="#000"/><rect x="6" y="6" width="1" height="1" fill="#FF00FF"/><rect x="7" y="6" width="2" height="1" fill="#000"/><rect x="9" y="6" width="1" height="1" fill="#00FFFF"/><rect x="10" y="6" width="1" height="1" fill="#FFFFFF"/><rect x="11" y="6" width="1" height="1" fill="#00FFFF"/><rect x="12" y="6" width="1" height="1" fill="#FFFFFF"/><rect x="13" y="6" width="1" height="1" fill="#000080"/><rect x="4" y="7" width="1" height="1" fill="#000080"/><rect x="5" y="7" width="1" height="1" fill="#FF00FF"/><rect x="6" y="7" width="1" height="1" fill="#000"/><rect x="7" y="7" width="1" height="1" fill="#FF00FF"/><rect x="8" y="7" width="1" height="1" fill="#000"/><rect x="9" y="7" width="1" height="1" fill="#FFFFFF"/><rect x="10" y="7" width="1" height="1" fill="#00FFFF"/><rect x="11" y="7" width="1" height="1" fill="#FFFFFF"/><rect x="12" y="7" width="1" height="1" fill="#00FFFF"/><rect x="13" y="7" width="1" height="1" fill="#000080"/><rect x="4" y="8" width="1" height="1" fill="#000080"/><rect x="5" y="8" width="1" height="1" fill="#000"/><rect x="6" y="8" width="1" height="1" fill="#FF00FF"/><rect x="7" y="8" width="2" height="1" fill="#000"/><rect x="9" y="8" width="1" height="1" fill="#00FFFF"/><rect x="10" y="8" width="1" height="1" fill="#FFFFFF"/><rect x="11" y="8" width="1" height="1" fill="#00FFFF"/><rect x="12" y="8" width="1" height="1" fill="#FFFFFF"/><rect x="13" y="8" width="1" height="1" fill="#000080"/><rect x="4" y="9" width="1" height="1" fill="#000080"/><rect x="5" y="9" width="1" height="1" fill="#FF00FF"/><rect x="6" y="9" width="1" height="1" fill="#000"/><rect x="7" y="9" width="1" height="1" fill="#FF00FF"/><rect x="8" y="9" width="1" height="1" fill="#000"/><rect x="9" y="9" width="1" height="1" fill="#FFFFFF"/><rect x="10" y="9" width="1" height="1" fill="#00FFFF"/><rect x="11" y="9" width="1" height="1" fill="#FFFFFF"/><rect x="12" y="9" width="1" height="1" fill="#00FFFF"/><rect x="13" y="9" width="1" height="1" fill="#000080"/><rect x="4" y="10" width="1" height="1" fill="#000080"/><rect x="5" y="10" width="1" height="1" fill="#000"/><rect x="6" y="10" width="1" height="1" fill="#FF00FF"/><rect x="7" y="10" width="2" height="1" fill="#000"/><rect x="9" y="10" width="1" height="1" fill="#00FFFF"/><rect x="10" y="10" width="1" height="1" fill="#FFFFFF"/><rect x="11" y="10" width="1" height="1" fill="#00FFFF"/><rect x="12" y="10" width="1" height="1" fill="#FFFFFF"/><rect x="13" y="10" width="1" height="1" fill="#000080"/><rect x="4" y="11" width="1" height="1" fill="#000080"/><rect x="5" y="11" width="1" height="1" fill="#FF00FF"/><rect x="6" y="11" width="1" height="1" fill="#000"/><rect x="7" y="11" width="1" height="1" fill="#FF00FF"/><rect x="8" y="11" width="1" height="1" fill="#000"/><rect x="9" y="11" width="1" height="1" fill="#FFFFFF"/><rect x="10" y="11" width="1" height="1" fill="#00FFFF"/><rect x="11" y="11" width="1" height="1" fill="#FFFFFF"/><rect x="12" y="11" width="1" height="1" fill="#00FFFF"/><rect x="13" y="11" width="1" height="1" fill="#000080"/><rect x="4" y="12" width="1" height="1" fill="#000080"/><rect x="5" y="12" width="1" height="1" fill="#000"/><rect x="6" y="12" width="1" height="1" fill="#FF00FF"/><rect x="7" y="12" width="2" height="1" fill="#000"/><rect x="9" y="12" width="4" height="1" fill="#FFFFFF"/><rect x="13" y="12" width="1" height="1" fill="#000080"/><rect x="4" y="13" width="1" height="1" fill="#000080"/><rect x="5" y="13" width="1" height="1" fill="#FF00FF"/><rect x="6" y="13" width="1" height="1" fill="#000"/><rect x="7" y="13" width="1" height="1" fill="#FF00FF"/><rect x="8" y="13" width="1" height="1" fill="#000"/><rect x="9" y="13" width="1" height="1" fill="#FFFFFF"/><rect x="10" y="13" width="1" height="1" fill="#00FFFF"/><rect x="11" y="13" width="1" height="1" fill="#FFFFFF"/><rect x="12" y="13" width="1" height="1" fill="#00FFFF"/><rect x="13" y="13" width="1" height="1" fill="#000080"/><rect x="4" y="14" width="1" height="1" fill="#000080"/><rect x="5" y="14" width="1" height="1" fill="#000"/><rect x="6" y="14" width="1" height="1" fill="#FF00FF"/><rect x="7" y="14" width="2" height="1" fill="#000"/><rect x="9" y="14" width="4" height="1" fill="#FFFFFF"/><rect x="13" y="14" width="1" height="1" fill="#000080"/><rect x="4" y="15" width="1" height="1" fill="#000080"/><rect x="5" y="15" width="1" height="1" fill="#FF00FF"/><rect x="6" y="15" width="1" height="1" fill="#000"/><rect x="7" y="15" width="1" height="1" fill="#FF00FF"/><rect x="8" y="15" width="1" height="1" fill="#000"/><rect x="9" y="15" width="4" height="1" fill="#FFFFFF"/><rect x="13" y="15" width="1" height="1" fill="#000080"/><rect x="0" y="16" width="5" height="1" fill="#000080"/><rect x="5" y="16" width="3" height="1" fill="#000"/><rect x="8" y="16" width="5" height="1" fill="#FFFFFF"/><rect x="13" y="16" width="5" height="1" fill="#000080"/><rect x="1" y="17" width="9" height="1" fill="#9A9A9A"/></svg>
<span style="left:581px;top:496px;font:12px Liberation Sans;line-height:14px;color:#000;transform:scaleX(0.7741);transform-origin:0 0;-webkit-text-stroke:0.15px #000;">E<u>x</u>it</span>
</body></html>
